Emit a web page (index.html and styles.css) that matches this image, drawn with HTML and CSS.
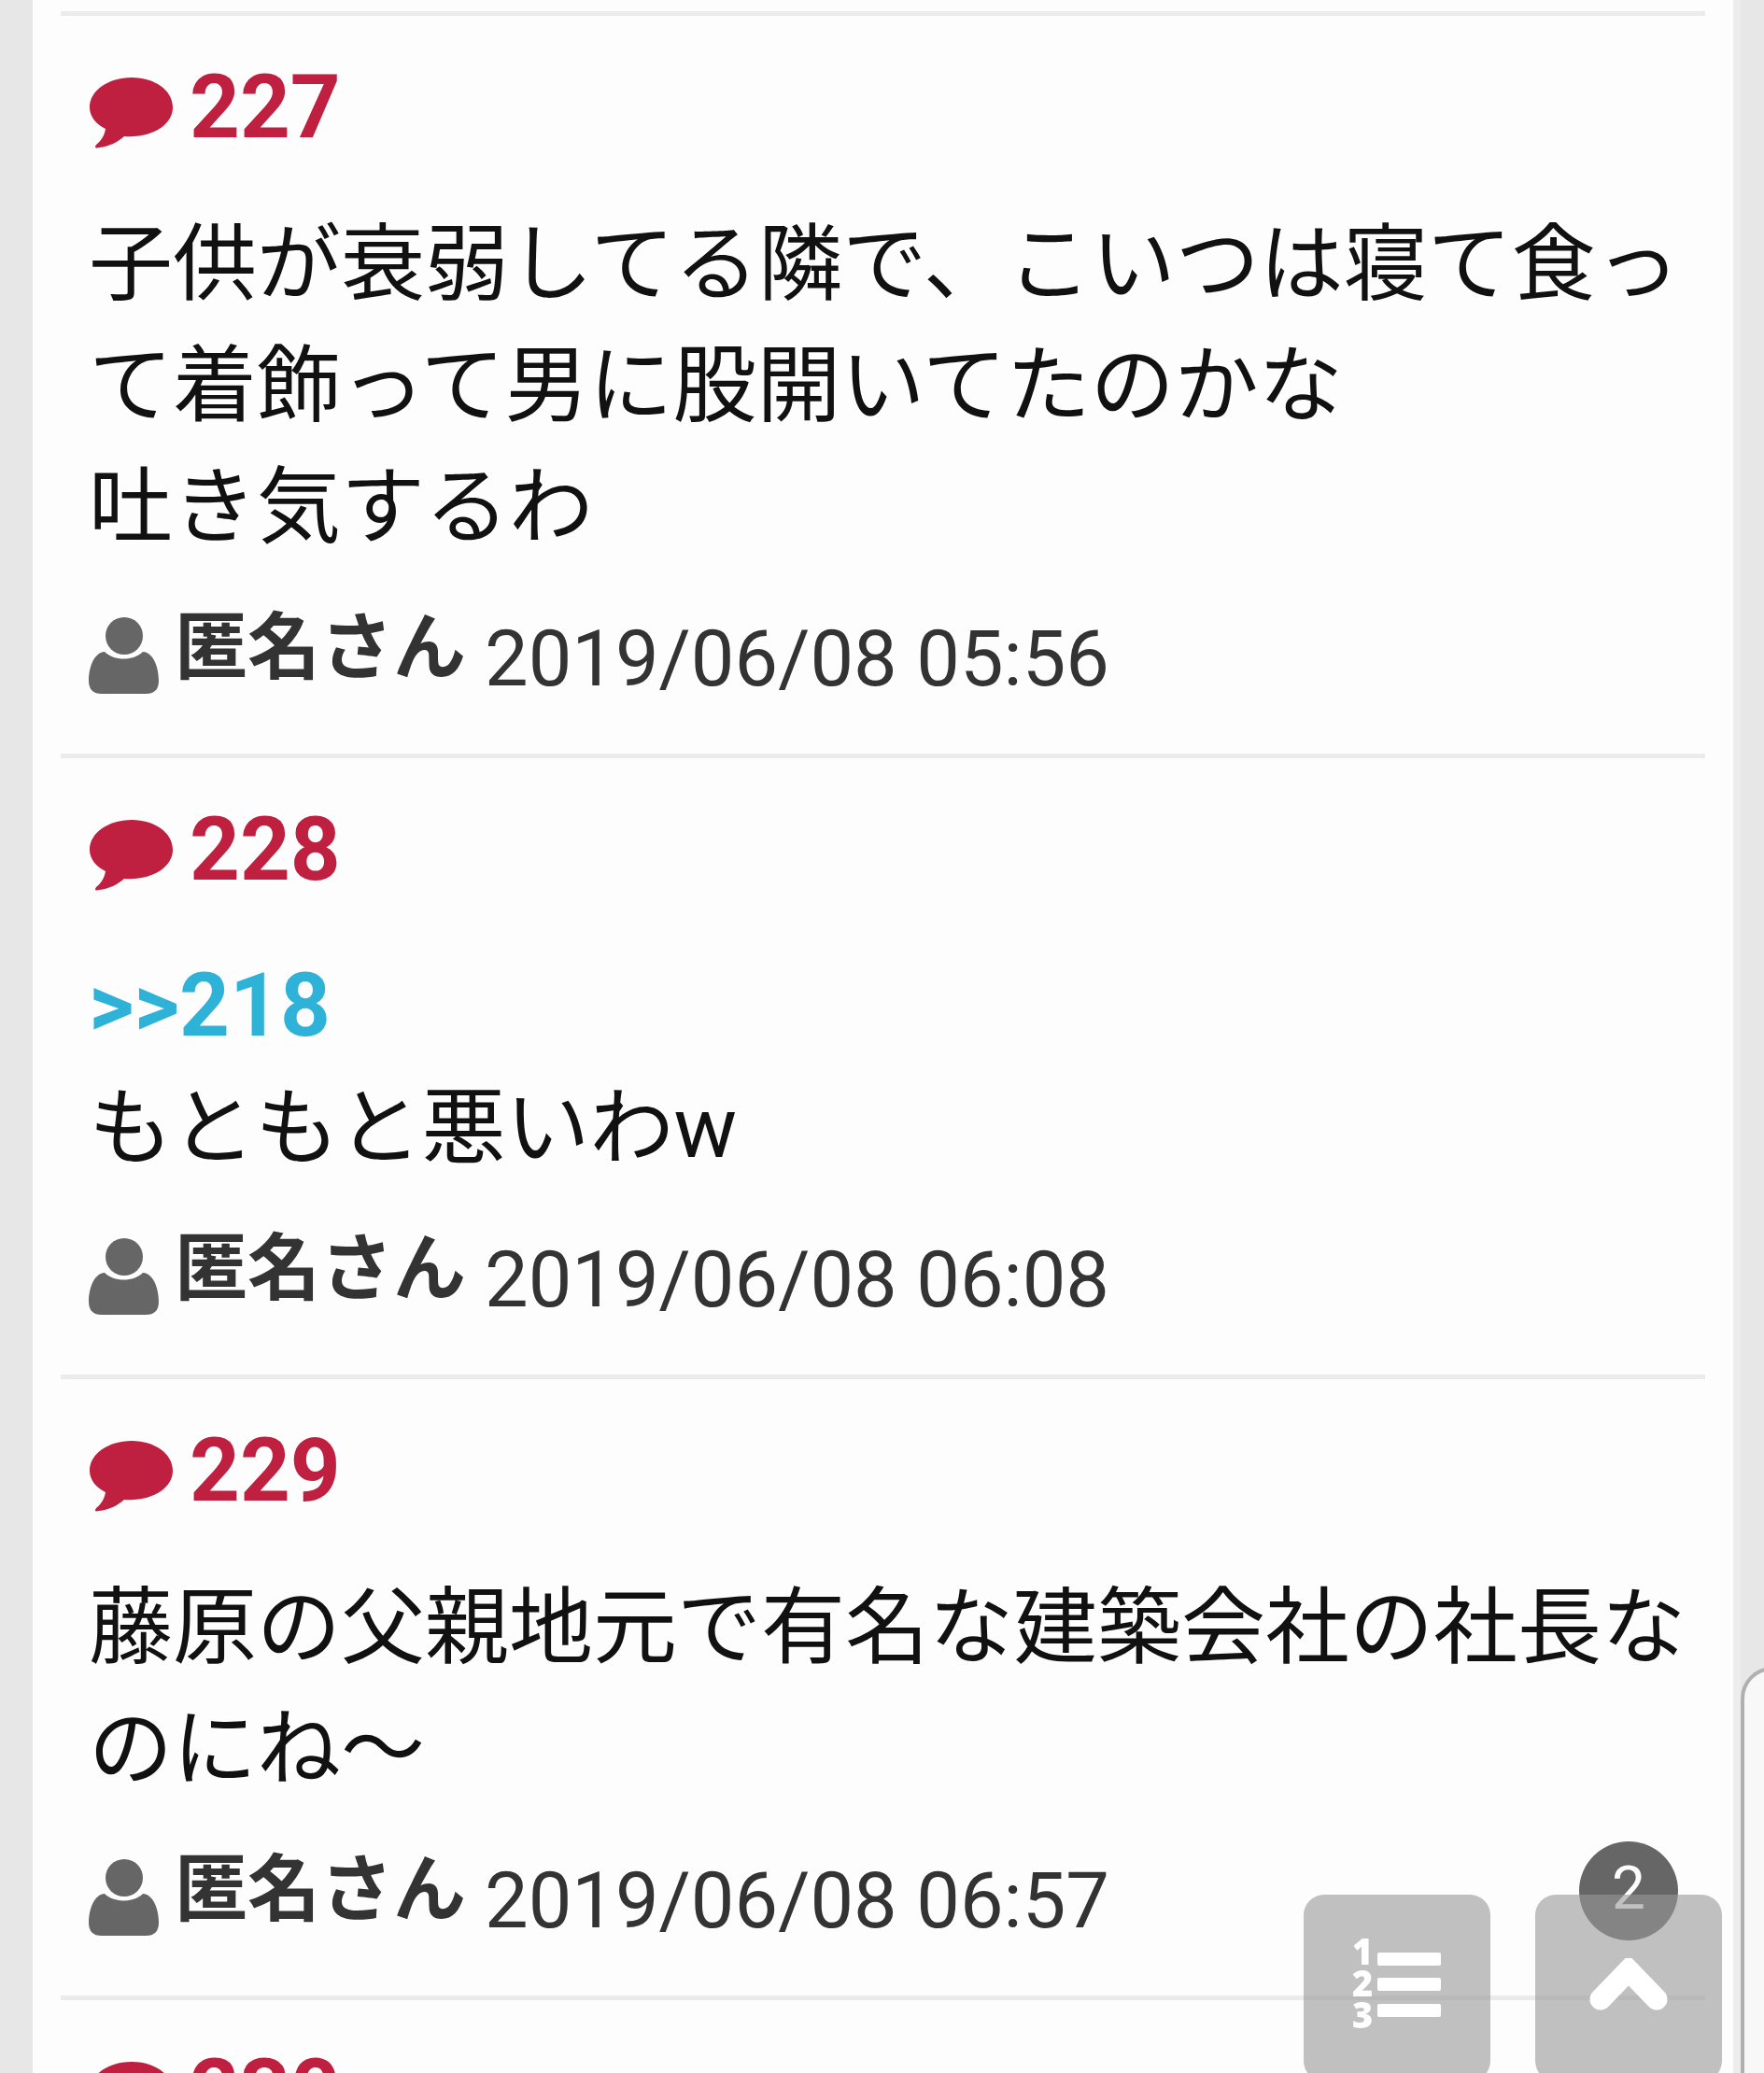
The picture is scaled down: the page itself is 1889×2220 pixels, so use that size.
FILE: index.html
```
<!DOCTYPE html>
<html lang="ja">
<head>
  <meta charset="UTF-8">
  <meta name="viewport" content="width=device-width, initial-scale=1">
  <title>コメント一覧</title>
  <link rel="stylesheet" href="styles.css">
</head>
<body>
<svg class="sprite" aria-hidden="true">
  <symbol id="icon-comment" viewBox="0 0 92 88">
    <path d="M46 12C21 12 1 26 1 44C1 54 8 62 18 67C17 74 13 80 8 84C6 87 7 88 11 87C22 86 31 81 38 75C69 77 90 62 90 44C90 26 71 12 46 12Z"/>
  </symbol>
  <symbol id="icon-user" viewBox="0 0 76 82">
    <circle cx="38" cy="20" r="20"/>
    <path d="M17 37C27 47 48 47 58 37C70 38 75 55 75 68Q75 82 61 82H14Q0 82 0 68C0 55 5 38 17 37Z"/>
  </symbol>
</svg>

<main class="page">
  <article class="comment">
    <h2 class="comment-no"><svg class="icon-comment"><use href="#icon-comment"/></svg>227</h2>
    <p class="comment-body">子供が衰弱してる隣で、こいつは寝て食って着飾って男に股開いてたのかな<br>吐き気するわ</p>
    <footer class="comment-meta">
      <svg class="icon-user"><use href="#icon-user"/></svg>
      <b class="name">匿名さん</b>
      <time class="date">2019/06/08 05:56</time>
    </footer>
  </article>

  <article class="comment">
    <h2 class="comment-no"><svg class="icon-comment"><use href="#icon-comment"/></svg>228</h2>
    <p class="comment-body"><a class="anchor" href="#218">&gt;&gt;218</a><br>もともと悪いわw</p>
    <footer class="comment-meta">
      <svg class="icon-user"><use href="#icon-user"/></svg>
      <b class="name">匿名さん</b>
      <time class="date">2019/06/08 06:08</time>
    </footer>
  </article>

  <article class="comment">
    <h2 class="comment-no"><svg class="icon-comment"><use href="#icon-comment"/></svg>229</h2>
    <p class="comment-body">藤原の父親地元で有名な建築会社の社長なのにね〜</p>
    <footer class="comment-meta">
      <svg class="icon-user"><use href="#icon-user"/></svg>
      <b class="name">匿名さん</b>
      <time class="date">2019/06/08 06:57</time>
    </footer>
  </article>

  <article class="comment">
    <h2 class="comment-no"><svg class="icon-comment"><use href="#icon-comment"/></svg>230</h2>
  </article>
</main>

<aside class="drawer"></aside>

<nav class="float-nav">
  <button class="float-btn" type="button" aria-label="コメント番号">
    <svg class="icon-list" viewBox="0 0 96 100">
      <text x="0" y="29">1</text>
      <text x="0" y="63">2</text>
      <text x="0" y="97">3</text>
      <rect x="27" y="16" width="68" height="14" rx="2"/>
      <rect x="27" y="43" width="68" height="14" rx="2"/>
      <rect x="27" y="71" width="68" height="14" rx="2"/>
    </svg>
  </button>
  <div class="top-wrap">
    <span class="badge">2</span>
    <button class="float-btn" type="button" aria-label="ページの先頭へ">
      <svg class="icon-up" viewBox="0 0 84 56">
        <path d="M12 44L42 13L72 44"/>
      </svg>
    </button>
  </div>
</nav>
</body>
</html>
```

FILE: styles.css
```
* {
  box-sizing: border-box;
}
body {
  margin: 0;
  height: 100vh;
  overflow: hidden;
  background: #e7e7e7;
  color: #111;
  font-family: Roboto, "Noto Sans CJK JP", sans-serif;
}
.sprite {
  display: none;
}

.page {
  height: 100vh;
  margin: 0 33px 0 35px;
  padding: 12px 30px 0;
  overflow: hidden;
  background: #fdfdfd;
  box-shadow: 8px 0 0 #ededed;
}

/* comments */
.comment {
  padding: 33px 20px 60px 30px;
  border-top: 5px solid #ebebeb;
}
.comment-no {
  display: flex;
  align-items: center;
  gap: 16px;
  margin: 0 0 39px;
  color: #bf203f;
  font-size: 94px;
  line-height: 130px;
}
.icon-comment {
  width: 92px;
  height: 88px;
  fill: #bf203f;
}
.comment-body {
  margin: 0;
  font-size: 90px;
  line-height: 130px;
}
.anchor {
  color: #2eb2d8;
  font-size: 94px;
  font-weight: bold;
  line-height: 100px;
  text-decoration: none;
}
.comment-meta {
  display: flex;
  align-items: flex-end;
  margin-top: 46px;
  color: #333;
}
.icon-user {
  width: 76px;
  height: 82px;
  margin-bottom: 4px;
  fill: #666;
}
.name {
  margin: 0 20px 12px 16px;
  font-size: 78px;
  line-height: 80px;
}
.date {
  font-size: 83px;
  line-height: 82px;
}

/* side drawer, only its edge is visible */
.drawer {
  position: fixed;
  top: 1785px;
  right: -60px;
  bottom: -40px;
  width: 85px;
  border: 4px solid #b0b0b0;
  border-radius: 34px;
  background: #f8f8f8;
}

/* floating buttons */
.float-nav {
  position: fixed;
  right: 45px;
  bottom: -9px;
  display: flex;
  gap: 48px;
}
.float-btn {
  position: relative;
  display: flex;
  align-items: center;
  justify-content: center;
  width: 200px;
  height: 200px;
  padding: 0 0 8px;
  border: 0;
  border-radius: 22px;
  background: rgba(152, 152, 152, 0.6);
}
.top-wrap {
  position: relative;
}
.badge {
  position: absolute;
  top: -57px;
  left: 47px;
  width: 106px;
  height: 106px;
  border-radius: 50%;
  background: #666;
  color: #fff;
  font-size: 64px;
  line-height: 102px;
  text-align: center;
}
.icon-list {
  width: 96px;
  height: 100px;
  fill: #fff;
  font-family: "Open Sans", sans-serif;
  font-size: 38px;
  font-weight: 800;
}
.icon-up {
  width: 84px;
  height: 56px;
  fill: none;
  stroke: #fff;
  stroke-width: 23px;
  stroke-linecap: round;
}
```
